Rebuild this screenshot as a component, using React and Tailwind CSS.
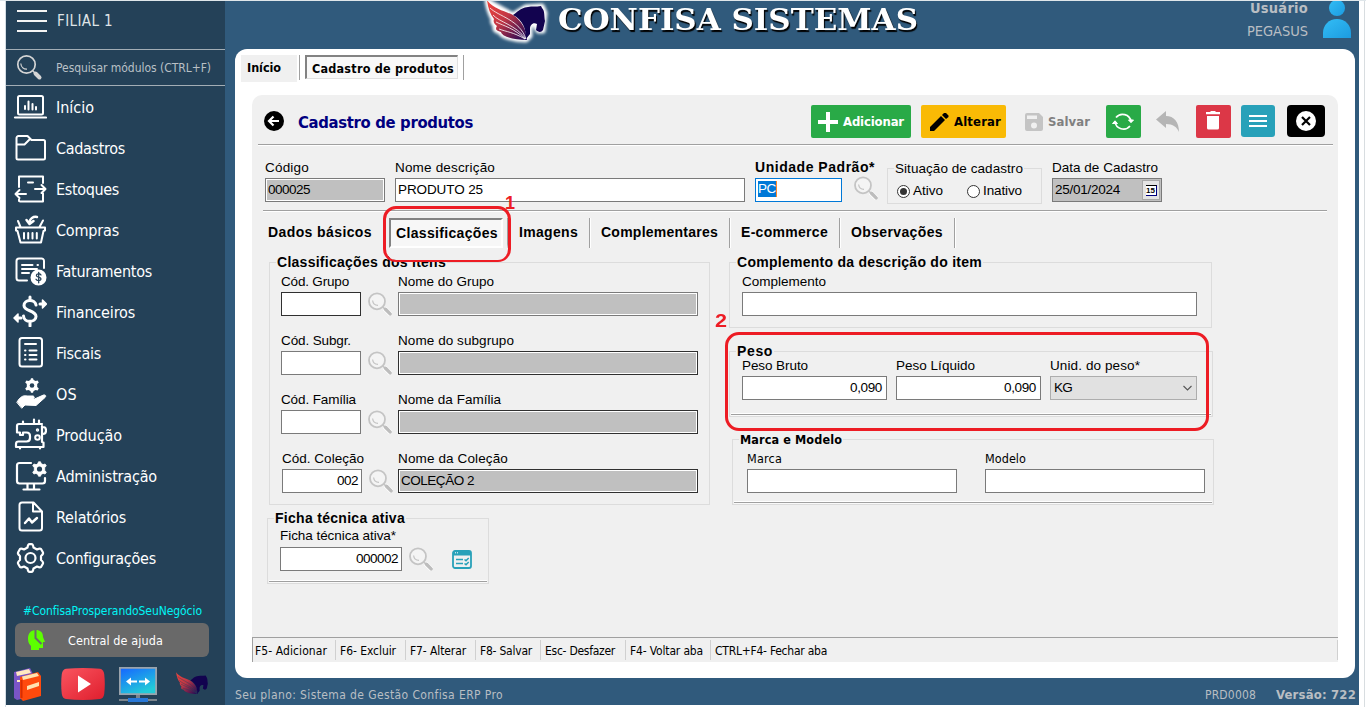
import React, { useLayoutEffect, useRef, useState } from "react";

const TAHOMA = "font-['DejaVu_Sans_Condensed','DejaVu_Sans',sans-serif]";
const SANS = "font-['Liberation_Sans',sans-serif]";

/* Text that spreads its letters (or its glyphs, with stretch) over a set width. */
function Fit({ w, className = "", stretch = false, children }) {
  const ref = useRef(null);
  const [style, setStyle] = useState({});
  useLayoutEffect(() => {
    const natural = ref.current.getBoundingClientRect().width;
    const n = String(children).length;
    if (stretch) setStyle({ transform: `scaleX(${w / natural})` });
    else setStyle({ letterSpacing: `${(w - natural) / n}px` });
  }, [w, children, stretch]);
  return (
    <span className={`block shrink-0 ${className}`} style={{ width: w }}>
      <span ref={ref} className="inline-block origin-left whitespace-nowrap" style={style}>
        {children}
      </span>
    </span>
  );
}

function Label({ w, children, bold }) {
  return (
    <Fit w={w} className={bold ? "h-[15px] text-[14px] leading-[15px] font-bold" : "h-[15px] text-[13.5px] leading-[15px]"}>
      {children}
    </Fit>
  );
}

function Magnifier() {
  return (
    <svg className="h-6 w-6 shrink-0" viewBox="0 0 24 24" fill="none">
      <path d="M16.5 16.5L23 22.8" stroke="#fff" strokeWidth="4.6" />
      <circle cx="9" cy="9.3" r="8" fill="#f4f4f4" stroke="#c4c4c4" strokeWidth="1.8" />
      <path d="M4.6 8.5c.3 3 2.3 4.8 5.4 4.8" stroke="#c4c4c4" strokeWidth="1.2" />
      <path d="M14.8 15l3 3" stroke="#c4c4c4" strokeWidth="1.6" />
      <path d="M17.5 17.3l4.6 4.6" stroke="#bdbdbd" strokeWidth="3.4" strokeLinecap="round" />
    </svg>
  );
}

function Pegasus({ className, glow, id }) {
  return (
    <svg className={className} viewBox="0 0 64 45" overflow="visible">
      <defs>
        <linearGradient id={id} x1="0" y1="0" x2="1" y2="1">
          <stop offset="0" stopColor="#f2453d" />
          <stop offset=".45" stopColor="#c23745" />
          <stop offset="1" stopColor="#150457" />
        </linearGradient>
        <filter id={id + "g"} x="-20%" y="-20%" width="140%" height="140%">
          <feGaussianBlur stdDeviation="1.5" />
        </filter>
      </defs>
      {glow && (
        <g filter={`url(#${id}g)`} stroke="#fff" strokeWidth="5" fill="#fff" strokeLinejoin="round">
          <path d="M2 0C3 8 5 14 8 19c-1 3 0 5 3 7-2 3-1 5 4 6 2 5 15 8 26 8l4-4V26l4-3 4 8h5l2-18-3-7-16 1-13 8L8 4z" />
        </g>
      )}
      <path fill={`url(#${id})`} d="M2 0C3 8 5 14 9 19c-1 3 0 5 3 7-2 3-1 5 4 6 1 5 14 8 26 8C41 29 37 21 28 15 20 11 8 9 2 0z" />
      <g stroke={glow ? "#fff" : "#244158"} strokeWidth=".8" fill="none">
        <path d="M5 8c8 8 30 12 36 31M8 15c6 7 23 10 33 24M11 22c8 4 18 6 29 17M14 29c8 3 14 3 26 10" />
      </g>
      <path fill="#12034f" d="M28 15c4-2 6-7 15-8 4-1 8 0 13-1l1 2c3 3 2 8 3 13l-2 9c-2 3-5 2-7 0l1-6c-4-2-7 1-7 5v5l-4 5C41 29 38 20 28 15z" />
    </svg>
  );
}

function MenuIcon({ children }) {
  return (
    <svg className="mt-1 h-8 w-[34px] shrink-0" viewBox="0 0 34 32" fill="none" stroke="#fff" strokeWidth="2" strokeLinecap="round" strokeLinejoin="round">
      {children}
    </svg>
  );
}

const GEAR = "M-1.6-5.4L-1-7.2H1L1.6-5.4 3.6-4.4 5.6-5 6.8-3 5.2-1.6V1.6L6.8 3 5.6 5 3.6 4.4 1.6 5.4 1 7.2H-1L-1.6 5.4-3.6 4.4-5.6 5-6.8 3-5.2 1.6V-1.6L-6.8-3-5.6-5-3.6-4.4z";

const MENU = [
  ["Início", 38, <><rect x="5" y="6" width="25" height="18.500" rx="1.500" /><path d="M2 27.500h31" strokeWidth="2.200" /><path d="M12 16v3M15.500 11.500v8M19.500 14v5.500M23 17v2.500" /></>],
  ["Cadastros", 69, <path d="M3.500 7a2 2 0 0 1 2-2h9l4 4h12a1.500 1.500 0 0 1 1.500 1.500V27a1.500 1.500 0 0 1-1.500 1.500H5A1.500 1.500 0 0 1 3.500 27zM3.500 13.500h8l5-5" />],
  ["Estoques", 63, <><path d="M6 15V4.500h24V11M30 21.500v8H7M15 10.500h5M6 29v-1.500M22 17h10M28.500 13l4 4-4 4M13 22H3M6.500 18l-4 4 4 4" /></>],
  ["Compras", 63, <><path d="M3 14.500h29v3l-1.500.5-2.500 11.500H7.500L4.500 18 3 17.500zM7.500 14l-2.500-6M26.500 14L30 7.500M11 20v5.500M15.200 20v5.500M19.500 20v5.500M23.800 20v5.500" /><path d="M24 4c-4-.7-7 1.500-7.500 5M13.500 7l3 4L20.500 8" strokeWidth="2.500" /></>],
  ["Faturamentos", 96, <><path d="M14 26.500H6A2.500 2.500 0 0 1 3.500 24V7A2.500 2.500 0 0 1 6 4.500h22A2.500 2.500 0 0 1 31 7v7M9 11h10.500M24.500 11h.5M9 15h15M9 19h7" /><circle cx="25.500" cy="23.500" r="7" fill="#fff" /><path d="M28 21c-1-2-5-1.500-4.500.8.500 1.900 4.500 1 4.500 3.200 0 2-4 2.200-5 .3M25.700 18.300v10.500" stroke="#244158" strokeWidth="1.300" /></>],
  ["Financeiros", 79, <><path d="M23 10c-1-6-12-6-12 .5 0 6 12 4.500 12 11 0 6.500-12 6.500-12.500-.5M17 2v3M17 27.500v3.500" strokeWidth="3" /><path d="M27 9h4M8 23H4" strokeWidth="3" /><path d="M29.500 5l4 4-4 4zM5 19l-4 4 4 4z" fill="#fff" strokeWidth="1.500" /></>],
  ["Fiscais", 45, <><rect x="6.500" y="2" width="22.500" height="28.500" rx="2.500" /><path d="M12 8h11M16.500 14.500h7M16.500 19h7M16.500 23.500h7M12 14.500h.5M12 19h.5M12 23.500h.5" /></>],
  ["OS", 21, <><g transform="translate(19 8.500)"><path d={GEAR} fill="#fff" stroke="none" /><circle r="2.300" fill="#244158" stroke="none" /></g><path d="M4 25c3-5 6-7 10-6h6c2 .5 1.500 3-.5 3h-4 6l9-4c2-.5 3 1 1.500 2.500L23 28.500l-11-.5-3 3z" fill="#fff" strokeWidth="1" /></>],
  ["Produção", 66, <><path d="M29 8v16M29 6H6a2 2 0 0 0-2 2v6.500h3v2.500h3v-2.500h3.500q3.500 0 3.500 3.500v2q0 3.500-3.500 3.500H5.500Q3 23.500 3 26v3h27.500v-4.500M10 6V3.500M21 6V1.500M26 6V2.500M30 9q3 0 3 3.500T30 16M7 29v1.500M27 29v1.500" strokeWidth="2.200" /><circle cx="24.500" cy="19.500" r="2.300" /><circle cx="24.500" cy="12" r=".7" /></>],
  ["Administração", 101, <><path d="M18 4H6.500A2.500 2.500 0 0 0 4 6.500V22a2.500 2.500 0 0 0 2.500 2.500H29.500a2.500 2.500 0 0 0 2.500-2.500V19M14.500 25v5M21 25v5M10.500 30.500h16" strokeWidth="2.200" /><g transform="translate(26.500 10)"><path d={GEAR} fill="#fff" stroke="#fff" strokeWidth=".8" /><circle r="2.600" fill="#244158" stroke="none" /></g></>],
  ["Relatórios", 70, <><path d="M20 2.500H9A2.500 2.500 0 0 0 6.500 5v23A2.500 2.500 0 0 0 9 30.500h17.500A2.500 2.500 0 0 0 29 28V11.500L20.500 2.500zM20 2.500v9h9" /><path d="M12 23l4-4.500 3 4L24 18" strokeWidth="2.400" /></>],
  ["Configurações", 100, <g transform="translate(17.500 17)"><path d="M-3-10.500Q-2.500-13.800-1-13.800H1Q2.500-13.800 3-10.500L6.500-8.500Q9.500-10 10.500-9L12.500-5.500Q13-4 10.500-2V2Q13 4 12.500 5.500L10.500 9Q9.500 10 6.500 8.500L3 10.500Q2.500 13.800 1 13.800H-1Q-2.500 13.800-3 10.500L-6.500 8.500Q-9.500 10-10.500 9L-12.500 5.500Q-13 4-10.500 2V-2Q-13-4-12.500-5.500L-10.500-9Q-9.500-10-6.500-8.500z" strokeWidth="2.200" /><circle r="5" strokeWidth="2.200" /></g>],
];

function Sidebar() {
  return (
    <aside className={`flex h-[704px] w-[219px] shrink-0 flex-col bg-[#244158] text-white ${TAHOMA}`}>
      <div className="flex h-12 items-center pb-[9px] pl-[11px]">
        <div className="flex w-[30px] flex-col gap-[8px]">
          <div className="h-[2px] bg-[#f4f4f4]" /><div className="h-[2px] bg-[#f4f4f4]" /><div className="h-[2px] bg-[#f4f4f4]" />
        </div>
        <Fit w={56} className="ml-[10px] pt-[2px] text-[15px] text-[#dfe3e6]">FILIAL 1</Fit>
      </div>
      <div className="flex h-[37px] items-center border-y border-[#a3adb5] pl-[10px]">
        <svg className="h-7 w-7" viewBox="0 0 28 28" fill="none" stroke="#d5d5d5">
          <circle cx="10.500" cy="10.500" r="8.700" strokeWidth="1.700" /><path d="M4.800 9.500c.3 3.500 3 5.800 6.200 5.700" strokeWidth="1.200" /><path d="M17 17l2.500 2.500" strokeWidth="1.500" /><path d="M19.500 19.500l4 4" strokeWidth="4" strokeLinecap="round" />
        </svg>
        <Fit w={155} className="ml-[12px] text-[12px] text-[#b9c0c6]">Pesquisar módulos (CTRL+F)</Fit>
      </div>
      <nav>
        {MENU.map(([name, w, icon]) => (
          <div key={name} className="flex h-[41px] items-start gap-[9px] pl-[7px]">
            <MenuIcon>{icon}</MenuIcon>
            <Fit w={w} className="pt-[12px] text-[16px] leading-[20px]">{name}</Fit>
          </div>
        ))}
      </nav>
      <Fit w={179} className="mt-[24px] ml-[17px] h-[16px] pt-[1px] text-[12px] leading-[16px] text-[#00f5f5]">#ConfisaProsperandoSeuNegócio</Fit>
      <div className="mt-[5px] ml-[9px] flex h-[34px] w-[194px] items-center rounded-[6px] bg-[#696969] pl-[12px]">
        <svg className="h-[22px] w-[20px]" viewBox="0 0 20 22">
          <path fill="#5cff00" d="M9 1C3 1 1 5 1 10c0 4 2 6 3 7v4h8v-2h4v-6h2l-2-5C16 3 13 1 9 1z" />
          <path d="M8.500 0v9l6 6" stroke="#696969" strokeWidth="2" fill="none" />
        </svg>
        <Fit w={95} className="ml-[21px] pt-[2px] text-[12.500px] leading-[16px]">Central de ajuda</Fit>
      </div>
      <div className="mt-[9px] flex h-9 items-center pl-[7px]">
        <svg className="h-9 w-[30px]" viewBox="0 0 30 36">
          <path d="M1 6l16-4 3 6v22L4 34l-3-2z" fill="#7a55c7" /><path d="M3 6l13-3 2 4-14 3z" fill="#ffe9c0" /><path d="M4 15h4" stroke="#ffe9c0" strokeWidth="2" />
          <path d="M7 11l18-5 3 4v20l-18 5-3-3z" fill="#ff4a0d" /><path d="M9 10.500l15-3.500 2 3-16 4z" fill="#ffe2b0" /><path d="M14 20l12-4v4l-12 4z" fill="#ffe2b0" /><path d="M8.500 14v18" stroke="#d92d00" strokeWidth="2" />
        </svg>
        <svg className="ml-[18px] h-8 w-[44px]" viewBox="0 0 44 32">
          <defs><linearGradient id="yt" x2="1" y2="1"><stop stopColor="#fa5560" /><stop offset="1" stopColor="#df1e2d" /></linearGradient></defs>
          <path d="M5 .800Q22-.800 39 .800 42.500 1.500 43.200 6q1.200 10 0 20-.7 4.500-4.200 5-17 2-34 0Q1.500 30.500.8 26-.400 16 .8 6 1.500 1.500 5 .800z" fill="url(#yt)" /><path d="M17 7.500v17l13-8.500z" fill="#fff" />
        </svg>
        <svg className="ml-[14px] h-[35px] w-[38px]" viewBox="0 0 38 35">
          <defs><linearGradient id="mon" x2=".6" y2="1"><stop stopColor="#1768ff" /><stop offset="1" stopColor="#22cbd8" /></linearGradient></defs>
          <path d="M0 0h38v28H0z" fill="#9aa3ac" /><path d="M1.800 1.800h34.400v24.400H1.800z" fill="url(#mon)" /><path d="M17 28h4v4h-4z" fill="#7c858d" /><path d="M0 33h38" stroke="#7c858d" strokeWidth="2" /><path d="M9 31h20v4H9z" fill="#2878d8" />
          <path d="M7 14.500l5-4v3h6v2h-6v3zM31 14.500l-5-4v3h-6v2h6v3z" fill="#fff" />
        </svg>
        <Pegasus id="pgs" className="ml-[18px] h-[25px] w-[35px]" />
      </div>
    </aside>
  );
}

const INPUT = "flex h-6 shrink-0 items-center border text-[13.5px] leading-[15px]";
function Input({ className, grey, dark, children, right }) {
  return (
    <div className={`${INPUT} ${grey ? "bg-[#c0c0c0] shadow-[inset_0_0_0_1px_#fff]" : "bg-white"} ${dark ? "border-[#303030]" : "border-[#7a7a7a]"} ${right ? "justify-end pr-[3px]" : "pl-[2px]"} pb-[2px] ${className}`}>
      {children}
    </div>
  );
}

function Group({ legend, w, className, children, line, tahoma }) {
  return (
    <fieldset className={`flex flex-col border border-[#dcdcdc] ${className}`}>
      <legend className={`ml-[6px] h-4 pr-[1px] pl-[1px] leading-4 font-bold ${tahoma ? TAHOMA + " pt-[1px] text-[12.500px]" : "text-[14px]"}`}>
        <Fit w={w}>{legend}</Fit>
      </legend>
      {children}
      {line && <div className="mx-[1px] mt-auto h-[3px] border-t border-b border-t-white border-b-[#fafafa] bg-[#a0a0a0]" />}
    </fieldset>
  );
}

function Toolbar() {
  return (
    <div className={`flex h-[49px] pt-[10px] pl-[11px] ${TAHOMA}`}>
      <svg className="mt-[5px] h-[22px] w-[22px]" viewBox="0 0 22 22" fill="none"><circle cx="11" cy="11" r="10" fill="#000" /><path d="M16 11H7M10.500 6.500L6 11l4.500 4.500" stroke="#fff" strokeWidth="2.200" /></svg>
      <Fit w={175} className="mt-[5px] ml-[13px] h-[24px] text-[16.500px] leading-[25px] font-bold text-[#000080]">Cadastro de produtos</Fit>
      <div className="ml-[338px] flex h-[33px] w-[100px] items-center rounded-[2px] bg-[#29aa47] pl-[7px]">
        <svg className="h-5 w-5" viewBox="0 0 20 20"><path d="M8 0h4v8h8v4h-8v8H8v-8H0V8h8z" fill="#fff" /></svg>
        <Fit w={61} className="ml-[5px] text-[13px] font-bold text-white">Adicionar</Fit>
      </div>
      <div className="ml-[10px] flex h-[33px] w-[85px] items-center rounded-[2px] bg-[#f9ba05] pl-[8px]">
        <svg className="h-5 w-5" viewBox="0 0 20 20"><path d="M1 15L12 4l4 4L5 19H1zM13 3l2-2h2l2.500 2.500V5L17 7z" fill="#000" /></svg>
        <Fit w={47} className="ml-[5px] text-[13px] font-bold">Alterar</Fit>
      </div>
      <div className="ml-[19px] flex h-[33px] w-[67px] items-center">
        <svg className="h-[18px] w-[18px]" viewBox="0 0 18 18"><path fillRule="evenodd" d="M2 0h12l4 4v12a2 2 0 0 1-2 2H2a2 2 0 0 1-2-2V2a2 2 0 0 1 2-2zm0 2.500v3.500h10V2.500zM9 9.500a3 3 0 1 0 0 6 3 3 0 0 0 0-6z" fill="#c4c4c4" /></svg>
        <Fit w={42} className="ml-[5px] text-[13px] font-bold text-[#808080]">Salvar</Fit>
      </div>
      <div className="ml-[14px] flex h-[33px] w-[35px] items-center justify-center rounded-[2px] bg-[#29aa47]">
        <svg className="-ml-[1px] h-[22px] w-[22px]" viewBox="0 0 22 22" fill="none" stroke="#fff" strokeWidth="1.700"><path d="M4 6.500a8.500 8.500 0 0 1 15 4M18 15a8.500 8.500 0 0 1-15-4.500" /><path d="M16.500 9l2.500 2.700L21.500 9zM.500 12.500L3 9.800 5.500 12.500z" fill="#fff" strokeWidth="1" /></svg>
      </div>
      <svg className="mt-[6px] ml-[15px] h-[22px] w-[24px]" viewBox="0 0 24 22"><path d="M10 0v5c8 0 13 6 13 16-2-5-6-8-13-8v4L0 8.500z" fill="#b5b5b5" /></svg>
      <div className="ml-[16px] flex h-[33px] w-[35px] items-center justify-center rounded-[2px] bg-[#dc3747]">
        <svg className="-mt-[2px] -ml-[1px] h-[19px] w-[14px]" viewBox="0 0 14 19"><path d="M0 1h4l1-1h4l1 1h4v2.200H0zM1 5h12v12q0 1.500-1.500 1.500h-9Q1 18.500 1 17z" fill="#fff" /></svg>
      </div>
      <div className="ml-[10px] flex h-8 w-[34px] flex-col items-center justify-center gap-[3px] rounded-[3px] bg-[#28a1b9]">
        <div className="h-[2px] w-[18px] bg-white" /><div className="h-[2px] w-[18px] bg-white" /><div className="h-[2px] w-[18px] bg-white" />
      </div>
      <div className="ml-[12px] flex h-8 w-[38px] items-center justify-center rounded-[4px] bg-black">
        <svg className="h-5 w-5" viewBox="0 0 20 20"><circle cx="10" cy="10" r="10" fill="#fff" /><path d="M6 6l8 8M14 6l-8 8" stroke="#000" strokeWidth="2.200" /></svg>
      </div>
    </div>
  );
}

function Radio({ on }) {
  return (
    <span className="flex h-[13px] w-[13px] items-center justify-center rounded-full border border-[#333] bg-white">
      {on && <span className="h-[7px] w-[7px] rounded-full bg-[#333]" />}
    </span>
  );
}

function HeadFields() {
  return (
    <div className="flex h-[64px] pl-[13px]">
      <div className="mt-[14px]"><Label w={44}>Código</Label><Input grey className="mt-[3px] w-[120px]"><Fit w={42}>000025</Fit></Input></div>
      <div className="mt-[14px] ml-[10px]"><Label w={100}>Nome descrição</Label><Input className="mt-[3px] w-[350px]"><Fit w={85}>PRODUTO 25</Fit></Input></div>
      <div className="mt-[14px] ml-[10px]">
        <Label w={120} bold>Unidade Padrão*</Label>
        <div className="mt-[3px] flex h-6 w-[87px] items-start border border-[#0078d7] bg-white pt-[2px] pl-[2px]">
          <div className="h-4 border-r border-[#ff8728] bg-[#0078d7] text-[13.5px] leading-4 text-white"><Fit w={18}>PC</Fit></div>
        </div>
      </div>
      <div className="mt-[30px] -ml-[21px]"><Magnifier /></div>
      <fieldset className="mt-[14px] ml-[9px] flex h-[44px] w-[155px] flex-col border border-[#dcdcdc]">
        <legend className="ml-[6px] px-[1px] text-[13.5px] leading-[17px]"><Fit w={128}>Situação de cadastro</Fit></legend>
        <div className="mt-[6px] flex items-center pl-[9px] text-[13.5px] leading-4">
          <Radio on /><Fit w={30} className="ml-[3px]">Ativo</Fit>
          <span className="w-[24px]" /><Radio /><Fit w={39} className="ml-[3px]">Inativo</Fit>
        </div>
      </fieldset>
      <div className="mt-[14px] ml-[10px]">
        <Label w={106}>Data de Cadastro</Label>
        <div className="mt-[3px] flex h-6 w-[110px] items-center justify-between border border-[#7a7a7a] bg-[#c0c0c0] pr-[1px] pl-[2px] text-[13.5px]">
          <Fit w={65}>25/01/2024</Fit>
          <div className="flex h-5 w-[18px] items-center justify-center border border-[#a8a8a8] bg-[#e4e4e4]">
            <div className="h-[11px] w-[11px] border-t border-r border-b border-t-[#000] border-r-[#000080] border-b-[#000080] bg-white text-center text-[8px] leading-[10px] font-bold">15</div>
          </div>
        </div>
      </div>
    </div>
  );
}

function Rule({ className }) {
  return <div className={`h-[2px] shrink-0 border-t border-b border-t-[#a0a0a0] border-b-white ${className}`} />;
}
function Sep({ className }) {
  return <div className={`w-[2px] shrink-0 border-r border-l border-l-[#a0a0a0] border-r-white ${className}`} />;
}

function Tab({ w, children }) {
  return <Fit w={w} className="text-[14px] leading-[29px] font-bold">{children}</Fit>;
}

function Tabs() {
  return (
    <div className="relative flex h-[42px] pt-[6px] pl-[16px]">
      <Tab w={104}>Dados básicos</Tab>
      <div className="ml-[17px] h-[30px] w-[114px] border-t-2 border-r-2 border-b-2 border-l-2 border-t-[#828282] border-r-white border-b-white border-l-[#828282] bg-[#f7f7f7] pl-[5px] text-[14px] leading-[27px] font-bold">
        <Fit w={102}>Classificações</Fit>
      </div>
      <Sep className="ml-[4px] h-[30px]" /><span className="w-[10px]" /><Tab w={59}>Imagens</Tab>
      <Sep className="ml-[11px] h-[30px]" /><span className="w-[10px]" /><Tab w={117}>Complementares</Tab>
      <Sep className="ml-[11px] h-[30px]" /><span className="w-[10px]" /><Tab w={87}>E-commerce</Tab>
      <Sep className="ml-[11px] h-[30px]" /><span className="w-[10px]" /><Tab w={92}>Observações</Tab>
      <Sep className="ml-[11px] h-[30px]" />
      <div className="absolute top-[-6px] left-[131px] z-10 h-[56px] w-[128px] rounded-[13px] border-x-[3px] border-t-[3px] border-b-2 border-[#ed1c24] shadow-[inset_0_-5px_0_#f0f0f0]" />
      <div className="absolute top-[-19px] left-[253px] z-10 text-[18px] leading-[20px] font-bold text-[#ed1c24]">1</div>
    </div>
  );
}

function ClassRow({ a, aw, b, bw, first, last }) {
  return (
    <div className={`flex h-[59px] ${last ? "pl-[12px]" : "pl-[11px]"}`}>
      <div className="w-[80px]">
        <Label w={aw}>{a}</Label>
        <Input right dark={first} className="mt-[3px] w-[80px]">{last && <Fit w={21}>002</Fit>}</Input>
      </div>
      <div className="mt-[18px] ml-[7px]"><Magnifier /></div>
      <div className={last ? "ml-[5px]" : "ml-[6px]"}>
        <Label w={bw}>{b}</Label>
        <Input grey dark={!first} className="mt-[3px] w-[300px]">{last && <Fit w={73}>COLEÇÃO 2</Fit>}</Input>
      </div>
    </div>
  );
}

function Body() {
  return (
    <div className="flex h-[383px] pl-[15px]">
      <div className="w-[462px]">
        <Group legend="Classificações dos itens" w={169} className="ml-[2px] h-[251px] w-[441px]">
          <div className="pt-[4px]">
            <ClassRow a="Cód. Grupo" aw={68} b="Nome do Grupo" bw={96} first />
            <ClassRow a="Cód. Subgr." aw={70} b="Nome do subgrupo" bw={116} />
            <ClassRow a="Cód. Família" aw={75} b="Nome da Família" bw={103} />
            <ClassRow a="Cód. Coleção" aw={82} b="Nome da Coleção" bw={110} last />
          </div>
        </Group>
        <Group legend="Ficha técnica ativa" w={130} className="mt-[5px] h-[74px] w-[222px]" line>
          <div className="flex pt-[2px] pl-[12px]">
            <div><Label w={116}>Ficha técnica ativa*</Label><Input right className="mt-[4px] w-[122px]"><Fit w={42}>000002</Fit></Input></div>
            <div className="mt-[19px] ml-[7px]"><Magnifier /></div>
            <svg className="mt-[22px] ml-[19px] h-[19px] w-[20px]" viewBox="0 0 20 19" fill="none" stroke="#28a1b9"><rect x="1" y="1" width="18" height="17" rx="2" strokeWidth="1.800" /><path d="M1 3.500h18" strokeWidth="4" /><path d="M3 2.800h3" stroke="#fff" strokeDasharray="1 1" /><path d="M4 9.500h7M4 13.500h7M12.500 9.500l1.500 1.200 2.700-2.700M12.500 13.500l1.500 1.200 2.700-2.700" strokeWidth="1.500" /></svg>
          </div>
        </Group>
      </div>
      <div className="relative w-[490px]">
        <Group legend="Complemento da descrição do item" w={245} className="h-[74px] w-[483px]">
          <div className="pt-[4px] pl-[12px]"><Label w={84}>Complemento</Label><Input className="mt-[3px] w-[455px]" /></div>
        </Group>
        <Group legend="Peso" w={36} className="mt-[15px] h-[74px] w-[484px]" line>
          <div className="-mt-[1px] flex gap-[9px] pl-[12px]">
            <div><Label w={66}>Peso Bruto</Label><Input right className="mt-[3px] w-[145px] pr-[4px]"><Fit w={32}>0,090</Fit></Input></div>
            <div><Label w={79}>Peso Líquido</Label><Input right className="mt-[3px] w-[145px] pr-[4px]"><Fit w={32}>0,090</Fit></Input></div>
            <div>
              <Label w={90}>Unid. do peso*</Label>
              <div className="mt-[3px] flex h-6 w-[147px] items-center justify-between border border-[#adadad] bg-[#e1e1e1] pr-[4px] pl-[3px] text-[13.5px]">
                <Fit w={18}>KG</Fit>
                <svg className="h-2 w-[9px]" viewBox="0 0 9 8" fill="none" stroke="#555" strokeWidth="1.100"><path d="M.5 2l4 4 4-4" /></svg>
              </div>
            </div>
          </div>
        </Group>
        <Group legend="Marca e Modelo" w={102} tahoma className="mt-[14px] ml-[3px] h-[74px] w-[482px]" line>
          <div className={`flex gap-[28px] pt-[4px] pl-[14px] ${TAHOMA}`}>
            <div><Fit w={35} className="h-[15px] text-[12.500px] leading-[15px]">Marca</Fit><Input className="mt-[3px] w-[210px]" /></div>
            <div><Fit w={41} className="h-[15px] text-[12.500px] leading-[15px]">Modelo</Fit><Input className="mt-[3px] w-[220px]" /></div>
          </div>
        </Group>
        <div className="absolute top-[78px] left-[-4px] h-[99px] w-[484px] rounded-[14px] border-[3px] border-[#ed1c24]" />
        <div className="absolute top-[57px] left-[-14px] text-[19px] leading-[20px] font-bold text-[#ed1c24]"><Fit w={12} stretch>2</Fit></div>
      </div>
    </div>
  );
}

const KEYS = [
  ["F5- Adicionar", 72, "w-[83px] pl-[2px]"], ["F6- Excluir", 56, "w-[70px] pl-[4px]"], ["F7- Alterar", 56, "w-[70px] pl-[4px]"],
  ["F8- Salvar", 52, "w-[65px] pl-[4px]"], ["Esc- Desfazer", 70, "w-[85px] pl-[4px]"], ["F4- Voltar aba", 73, "w-[85px] pl-[4px]"],
];

export default function App() {
  return (
    <div className={`flex h-[707px] w-[1366px] overflow-hidden border-t border-[#dfe6ea] bg-white pl-[5px] text-black ${SANS}`}>
      <div className="w-[1px] bg-[#d4dde4]" />
      <Sidebar />
      <main className="flex h-[704px] w-[1134px] shrink-0 flex-col bg-[#305a7c]">
        <header className={`flex h-12 shrink-0 pl-[260px] ${TAHOMA}`}>
          <Pegasus id="pgl" glow className="-mt-[1px] h-[45px] w-16" />
          <div className="ml-[9px] h-10 w-[362px] font-['DejaVu_Serif',serif] text-[29px] leading-[38px] font-bold text-white [text-shadow:1px_2px_1px_#000]">
            <Fit w={360} stretch>CONFISA SISTEMAS</Fit>
          </div>
          <div className="ml-[300px] flex w-[88px] flex-col items-end text-[#b9bec3]">
            <Fit w={58} className="-mt-[3px] text-[14.500px] leading-[20px] font-bold">Usuário</Fit>
            <Fit w={61} className="mt-[4px] text-[14.500px] leading-[18px]">PEGASUS</Fit>
          </div>
          <svg className="ml-[14px] h-[38px] w-[30px]" viewBox="0 0 30 38"><defs><linearGradient id="us" x2="1" y2="1"><stop stopColor="#33bdf5" /><stop offset="1" stopColor="#1c9be0" /></linearGradient></defs><circle cx="15" cy="7" r="8" fill="url(#us)" /><path d="M1 37v-5c0-8 6-14 14-14s14 6 14 14v5z" fill="url(#us)" /></svg>
        </header>
        <section className="ml-[10px] flex h-[629px] w-[1120px] shrink-0 flex-col rounded-[12px] bg-white">
          <div className={`flex h-[46px] pt-[6px] pl-[6px] text-[12.500px] font-bold ${TAHOMA}`}>
            <div className="h-[27px] w-[56px] bg-[#f0f0f0] pl-[6px] leading-[25px]"><Fit w={34}>Início</Fit></div>
            <Sep className="ml-[2px] h-[25px]" />
            <div className="ml-[4px] h-[24px] w-[153px] border-t-2 border-r border-b border-l-2 border-t-[#828282] border-r-[#e0e0e0] border-b-[#e0e0e0] border-l-[#828282] bg-[#f8f8f8] pl-[5px] leading-[24px]"><Fit w={142}>Cadastro de produtos</Fit></div>
            <Sep className="ml-[5px] h-[25px]" />
          </div>
          <div className="ml-[17px] flex h-[567px] w-[1086px] flex-col rounded-t-[10px] bg-[#f0f0f0]">
            <Toolbar />
            <Rule className="mr-[5px] ml-[6px]" />
            <HeadFields />
            <Rule className="mr-[11px] ml-[11px]" />
            <Tabs />
            <Body />
            <footer className={`flex h-[25px] border-t border-l border-[#a0a0a0] pt-[2px] text-[12px] leading-[22px] ${TAHOMA}`}>
              {KEYS.map(([t, w, cls]) => (
                <div key={t} className={`h-5 border-r border-[#d0d0d0] ${cls}`}><Fit w={w}>{t}</Fit></div>
              ))}
              <div className="h-5 flex-1 border-r border-[#d0d0d0] pl-[4px]"><Fit w={112}>CTRL+F4- Fechar aba</Fit></div>
            </footer>
          </div>
        </section>
        <div className={`flex h-[27px] items-center justify-between pt-[7px] pr-[3px] pl-[10px] text-[12px] text-[#b9bec3] ${TAHOMA}`}>
          <Fit w={268}>Seu plano: Sistema de Gestão Confisa ERP Pro</Fit>
          <div className="flex items-center gap-[20px]"><Fit w={51}>PRD0008</Fit><Fit w={80} className="text-[13px] font-bold">Versão: 722</Fit></div>
        </div>
      </main>
      <div className="ml-[5px] w-[1px] bg-[#d8dde0]" />
    </div>
  );
}
